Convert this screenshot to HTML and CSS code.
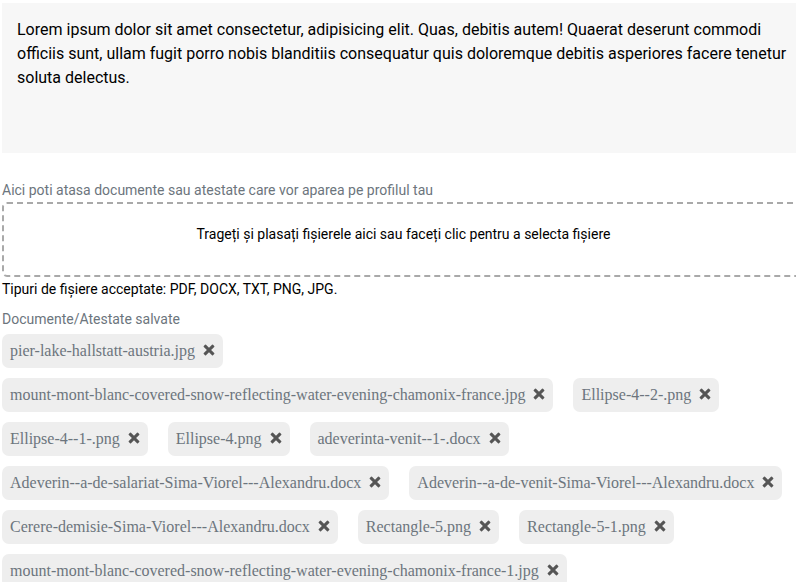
FILE: index.html
```html
<!DOCTYPE html>
<html lang="ro">
<head>
<meta charset="utf-8">
<title>Documente și atestate</title>
<link rel="stylesheet" href="styles.css">
</head>
<body>
<svg class="sprite" aria-hidden="true"><symbol id="times" viewBox="0 0 12 12"><path d="M3 0.7 6 3.7 9 0.7Q9.5 0.2 10 0.7L11.2 1.9Q11.7 2.4 11.2 2.9L8.1 6 11.2 9.1Q11.7 9.6 11.2 10.1L10 11.3Q9.5 11.8 9 11.3L6 8.3 3 11.3Q2.5 11.8 2 11.3L0.8 10.1Q0.3 9.6 0.8 9.1L3.9 6 0.8 2.9Q0.3 2.4 0.8 1.9L2 0.7Q2.5 0.2 3 0.7Z"/></symbol></svg>
<main class="profile">
  <p class="description">Lorem ipsum dolor sit amet consectetur, adipisicing elit. Quas, debitis autem! Quaerat deserunt commodi officiis sunt, ullam fugit porro nobis blanditiis consequatur quis doloremque debitis asperiores facere tenetur soluta delectus.</p>
  <p class="label">Aici poti atasa documente sau atestate care vor aparea pe profilul tau</p>
  <button type="button" class="dropzone">Trageți și plasați fișierele aici sau faceți clic pentru a selecta fișiere</button>
  <p class="types">Tipuri de fișiere acceptate: PDF, DOCX, TXT, PNG, JPG.</p>
  <h2 class="label">Documente/Atestate salvate</h2>
  <ul class="files">
    <li class="file"><span>pier-lake-hallstatt-austria.jpg</span><button type="button" class="remove" aria-label="Șterge"><svg><use href="#times"/></svg></button></li>
    <li class="file"><span>mount-mont-blanc-covered-snow-reflecting-water-evening-chamonix-france.jpg</span><button type="button" class="remove" aria-label="Șterge"><svg><use href="#times"/></svg></button></li>
    <li class="file"><span>Ellipse-4--2-.png</span><button type="button" class="remove" aria-label="Șterge"><svg><use href="#times"/></svg></button></li>
    <li class="file"><span>Ellipse-4--1-.png</span><button type="button" class="remove" aria-label="Șterge"><svg><use href="#times"/></svg></button></li>
    <li class="file"><span>Ellipse-4.png</span><button type="button" class="remove" aria-label="Șterge"><svg><use href="#times"/></svg></button></li>
    <li class="file"><span>adeverinta-venit--1-.docx</span><button type="button" class="remove" aria-label="Șterge"><svg><use href="#times"/></svg></button></li>
    <li class="file"><span>Adeverin--a-de-salariat-Sima-Viorel---Alexandru.docx</span><button type="button" class="remove" aria-label="Șterge"><svg><use href="#times"/></svg></button></li>
    <li class="file"><span>Adeverin--a-de-venit-Sima-Viorel---Alexandru.docx</span><button type="button" class="remove" aria-label="Șterge"><svg><use href="#times"/></svg></button></li>
    <li class="file"><span>Cerere-demisie-Sima-Viorel---Alexandru.docx</span><button type="button" class="remove" aria-label="Șterge"><svg><use href="#times"/></svg></button></li>
    <li class="file"><span>Rectangle-5.png</span><button type="button" class="remove" aria-label="Șterge"><svg><use href="#times"/></svg></button></li>
    <li class="file"><span>Rectangle-5-1.png</span><button type="button" class="remove" aria-label="Șterge"><svg><use href="#times"/></svg></button></li>
    <li class="file"><span>mount-mont-blanc-covered-snow-reflecting-water-evening-chamonix-france-1.jpg</span><button type="button" class="remove" aria-label="Șterge"><svg><use href="#times"/></svg></button></li>
  </ul>
</main>
</body>
</html>
```
FILE: styles.css
```css
* {
  box-sizing: border-box;
}

body {
  margin: 0;
  overflow: hidden;
  background: #fff;
  color: #000;
  font: 14px/20px Roboto, sans-serif;
}

.sprite {
  display: none;
}

.profile {
  margin: 0 -9px 0 2px;
  padding-top: 3px;
}

.description {
  min-height: 150px;
  margin: 0 0 27px;
  padding: 15px;
  background: #f7f7f7;
  font-size: 16px;
  line-height: 24px;
}

.label {
  margin: 0 0 2px;
  color: #6c757d;
  font-size: 14px;
  font-weight: 400;
}

.dropzone {
  display: block;
  width: 100%;
  padding: 20px 20px 31px;
  border: 2px dashed #a9a9a9;
  border-radius: 5px;
  background: #fff;
  color: #000;
  font: inherit;
  text-align: center;
}

.types {
  margin: 2px 0 10px;
}

.files {
  display: flex;
  flex-wrap: wrap;
  margin: 0;
  padding: 3px 0 0;
  list-style: none;
}

.file {
  display: flex;
  align-items: center;
  gap: 8px;
  height: 34px;
  margin: 0 20px 10px 0;
  padding: 0 8px;
  border-radius: 7px;
  background: #eee;
  color: #6c757d;
  font: 16px/24px "Liberation Serif", serif;
}

.remove {
  display: flex;
  padding: 0 0 2px;
  border: 0;
  background: none;
  color: #555;
}

.remove svg {
  width: 12px;
  height: 12px;
  fill: currentColor;
}
```
